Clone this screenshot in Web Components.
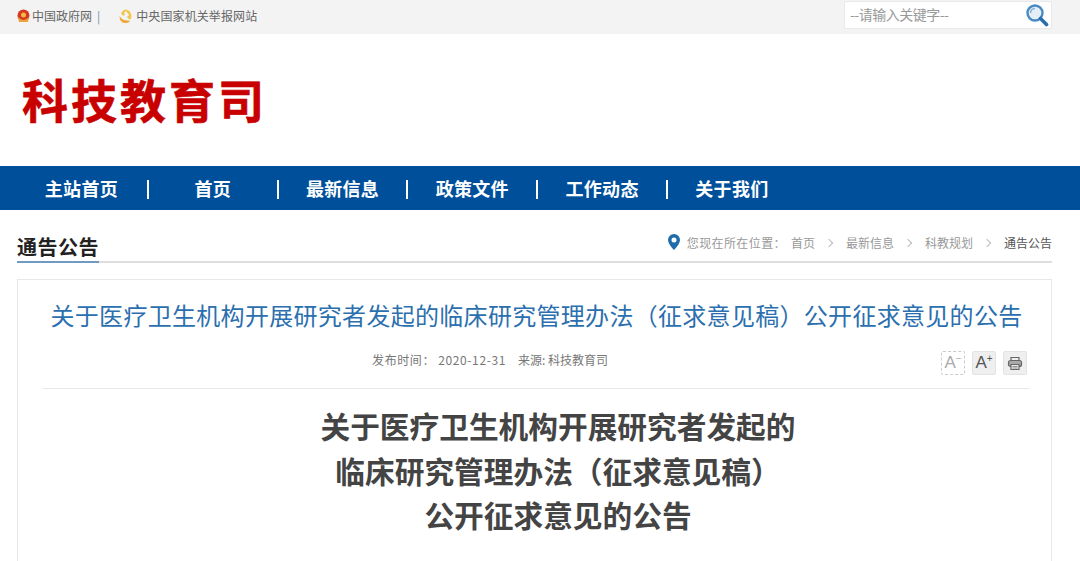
<!DOCTYPE html>
<html lang="zh">
<head>
<meta charset="utf-8">
<title>通告公告</title>
<style>
  html, body { margin: 0; padding: 0; background: #fff; }
  body { font-family: "Noto Sans CJK SC", "Liberation Sans", sans-serif; overflow: hidden; height: 561px; }
</style>
</head>
<body>
<top-bar></top-bar>
<site-logo>科技教育司</site-logo>
<main-nav></main-nav>
<section-head></section-head>
<article-card></article-card>

<script>
class TopBar extends HTMLElement {
  constructor () {
    super()
    this.shadow = this.attachShadow({ mode: 'open' })
  }
  connectedCallback () {
    this.shadow.innerHTML = /* html */`
    <style>
      :host { display: flex; align-items: flex-start; height: 34px; background: #f3f3f3; padding: 0 28px 0 17px; box-sizing: border-box; font-size: 12px; color: #666; }
      .links { display: flex; align-items: center; flex: 1; height: 31px; }
      .links svg { display: block; margin-right: 2px; }
      .sep { margin: 0 18px 0 5px; color: #6a8fb5; }
      .gap { margin-right: 4px !important; }
      .org { letter-spacing: 0.1px; }
      .search { box-sizing: border-box; display: flex; align-items: center; justify-content: space-between; width: 208px; height: 28px; margin-top: 1px; background: #fff; border: 1px solid #e9e9e9; padding: 0 2px 0 5px; color: #999; font-size: 14px; letter-spacing: -0.5px; }
      .search span { margin-top: -2px; }
    </style>
    <div class="links">
      <svg width="13" height="14" viewBox="0 0 13 14"><circle cx="6.5" cy="6.5" r="6" fill="#d8381e"/><path d="M1 8q5.500 6 11 0l-1 5H2z" fill="#eaa23a"/><circle cx="6.500" cy="6" r="2.500" fill="#f2b84a"/></svg>
      <span>中国政府网</span><span class="sep">|</span>
      <svg class="gap" width="14" height="14" viewBox="0 0 14 14"><path d="M7 .500a6.500 6.500 0 0 1 5 10.500L9 8l2-2-3-4-2 2 1 1.500-1.500 1.500L3 4.500A6.500 6.500 0 0 1 7 .500z" fill="#f3c649"/><path d="M1.500 7q3 5 9 4.500l1.500 1q-2 1.500-5 1.500-5.500-.5-5.500-7z" fill="#eda534"/></svg>
      <span class="org">中央国家机关举报网站</span>
    </div>
    <div class="search">
      <span>--请输入关键字--</span>
      <svg width="24" height="24" viewBox="0 0 24 24"><circle cx="10" cy="10" r="7.500" fill="#e3eef7" stroke="#4a8ac2" stroke-width="2.400"/><path d="M5.500 10a4.500 4.500 0 0 1 4.500-4.500" fill="none" stroke="#7fb0d8" stroke-width="1.500"/><path d="M15.500 15.500l6 6" stroke="#2a6eab" stroke-width="3.600" stroke-linecap="round"/></svg>
    </div>`
  }
}
customElements.define('top-bar', TopBar)

class SiteLogo extends HTMLElement {
  constructor () {
    super()
    this.shadow = this.attachShadow({ mode: 'open' })
  }
  connectedCallback () {
    this.shadow.innerHTML = /* html */`
    <style>
      :host { display: flex; align-items: center; height: 132px; padding-left: 22px; box-sizing: border-box; }
      div { font-size: 46px; font-weight: 700; letter-spacing: 3px; line-height: 1; color: #c80000; margin-top: -5px; -webkit-text-stroke: 0.6px #c80000; }
    </style>
    <div><slot></slot></div>`
  }
}
customElements.define('site-logo', SiteLogo)

class MainNav extends HTMLElement {
  constructor () {
    super()
    this.shadow = this.attachShadow({ mode: 'open' })
  }
  connectedCallback () {
    const items = ['主站首页', '首页', '最新信息', '政策文件', '工作动态', '关于我们']
    this.shadow.innerHTML = /* html */`
    <style>
      :host { display: flex; height: 44px; background: #004f9b; padding-left: 18px; color: #fff; font-size: 18px; font-weight: 700; letter-spacing: 0.3px; }
      ul { list-style: none; margin: 0; padding: 0; display: flex; align-items: center; }
      li { position: relative; width: 129.800px; text-align: center; line-height: 44px; }
      li:first-child span { margin-left: -3px; }
      li:not(:last-child)::after { content: ''; position: absolute; right: -1px; top: 14px; width: 2px; height: 19px; background: #fff; }
    </style>
    <ul>${items.map(t => `<li><span>${t}</span></li>`).join('')}</ul>`
  }
}
customElements.define('main-nav', MainNav)

class SectionHead extends HTMLElement {
  constructor () {
    super()
    this.shadow = this.attachShadow({ mode: 'open' })
  }
  connectedCallback () {
    this.shadow.innerHTML = /* html */`
    <style>
      :host { display: flex; justify-content: space-between; align-items: flex-end; box-sizing: border-box; height: 53px; margin: 0 28px 0 17px; border-bottom: 2px solid #dedede; }
      h2 { margin: 0 0 -2px; padding-top: 1px; font-size: 20px; font-weight: 700; line-height: 29px; letter-spacing: 0.5px; color: #222; border-bottom: 2px solid #6f9ac4; }
      .crumbs { display: flex; align-items: center; font-size: 12px; color: #999; height: 36px; margin-bottom: 1px; }
      .crumbs svg { display: block; margin-right: 8px; }
      .crumbs i { box-sizing: border-box; display: block; width: 6px; height: 6px; border: solid #bbb; border-width: 1px 1px 0 0; transform: rotate(45deg); margin: 1px 14px 0 11px; }
      .crumbs b { font-weight: 400; color: #555; }
      .where { margin-right: 5px; margin-left: -1px; letter-spacing: 0.4px; }
    </style>
    <h2>通告公告</h2>
    <div class="crumbs">
      <svg width="12" height="16" viewBox="0 0 12 16"><path fill-rule="evenodd" d="M6 0a6 6 0 0 1 6 6c0 4-6 10-6 10S0 10 0 6a6 6 0 0 1 6-6zm0 3.500a2.500 2.500 0 1 0 0 5 2.500 2.500 0 0 0 0-5z" fill="#1f6cab"/></svg>
      <span class="where">您现在所在位置：</span>
      <span>首页</span><i></i><span>最新信息</span><i></i><span>科教规划</span><i></i><b>通告公告</b>
    </div>`
  }
}
customElements.define('section-head', SectionHead)

class ArticleCard extends HTMLElement {
  constructor () {
    super()
    this.shadow = this.attachShadow({ mode: 'open' })
  }
  connectedCallback () {
    this.shadow.innerHTML = /* html */`
    <style>
      :host { display: block; box-sizing: border-box; margin: 16px 28px 0 17px; height: 300px; padding: 0 21px 0 24px; border: 1px solid #e8e8e8; border-bottom: 0; }
      h1 { margin: 0 0 0 1px; padding-top: 17px; font-size: 24px; font-weight: 400; line-height: 36px; letter-spacing: 0.3px; color: #2b6fae; text-align: center; white-space: nowrap; }
      .meta { position: relative; box-sizing: border-box; display: flex; justify-content: center; align-items: center; height: 49px; margin-top: 7px; padding: 0 92px 10px 0; font-size: 12px; color: #777; gap: 12px; border-bottom: 1px solid #e8e8e8; }
      .date { letter-spacing: 0.6px; }
      .tools { position: absolute; right: 3px; top: 11px; display: flex; gap: 7px; letter-spacing: 0; }
      .tool { box-sizing: border-box; width: 24px; height: 24px; border: 1px solid #e3e3e3; background: #efefef; border-radius: 2px; display: flex; align-items: center; justify-content: center; color: #555; font-size: 17px; font-family: "Liberation Sans", sans-serif; }
      .tool.off { background: #fff; border: 1px dashed #ccc; color: #aaa; }
      .tool sup { font-size: 10px; line-height: 1; margin-top: -8px; }
      .body { margin: 15px 0 0 44px; font-size: 29.700px; font-weight: 700; line-height: 44.500px; color: #444; text-align: center; }
      .body div { white-space: nowrap; }
    </style>
    <h1>关于医疗卫生机构开展研究者发起的临床研究管理办法（征求意见稿）公开征求意见的公告</h1>
    <div class="meta">
      <span class="date">发布时间： 2020-12-31</span><span>来源: 科技教育司</span>
      <div class="tools">
        <span class="tool off">A<sup>−</sup></span>
        <span class="tool">A<sup>+</sup></span>
        <span class="tool"><svg width="16" height="15" viewBox="0 0 16 15" fill="#aaa" stroke="#666" stroke-width="1.200"><path d="M4 4.500V1.500h8V4.500" fill="none"/><rect x="1.500" y="4.500" width="13" height="6" rx="2"/><path d="M4 8.500h8V13.500H4z" fill="#efefef"/><path d="M5.500 10.500h5M5.500 12h5" stroke-width="0.700"/></svg></span>
      </div>
    </div>
    <div class="body">
      <div>关于医疗卫生机构开展研究者发起的</div>
      <div>临床研究管理办法（征求意见稿）</div>
      <div>公开征求意见的公告</div>
    </div>`
  }
}
customElements.define('article-card', ArticleCard)
</script>
</body>
</html>
